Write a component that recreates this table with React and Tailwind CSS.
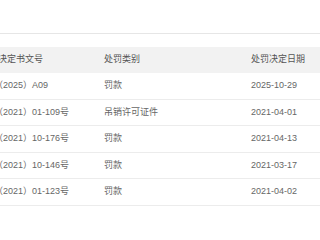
import React from "react";

const rows = [
  ["（2025）A09", "罚款", "2025-10-29"],
  ["（2021）01-109号", "吊销许可证件", "2021-04-01"],
  ["（2021）10-176号", "罚款", "2021-04-13"],
  ["（2021）10-146号", "罚款", "2021-03-17"],
  ["（2021）01-123号", "罚款", "2021-04-02"],
];

export default function App() {
  return (
    <div
      className="w-[320px] h-[240px] bg-white overflow-hidden text-[9px]"
      style={{ fontFamily: '"Liberation Sans", "Noto Sans CJK SC", sans-serif' }}
    >
      <div className="h-[33px]" />
      <div className="h-px bg-[#e6e6e6]" />
      <div className="h-[13px]" />
      <div className="ml-[-6px]">
        <div className="flex items-center h-[26px] bg-[#f2f2f2] text-[#555]">
          <div className="w-[110px] pl-[4px]">决定书文号</div>
          <div className="w-[147px]">处罚类别</div>
          <div>处罚决定日期</div>
        </div>
        {rows.map((r, i) => (
          <div
            key={i}
            className="flex items-center h-[26.5px] border-b border-[#ececec] text-[#666]"
          >
            <div className="w-[110px]">{r[0]}</div>
            <div className="w-[147px]">{r[1]}</div>
            <div>{r[2]}</div>
          </div>
        ))}
      </div>
    </div>
  );
}
